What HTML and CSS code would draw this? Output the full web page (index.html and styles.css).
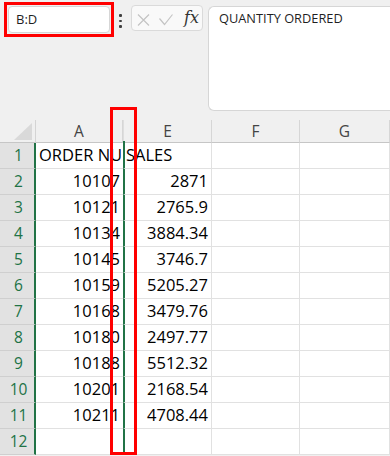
FILE: index.html
```html
<!DOCTYPE html>
<html>
<head>
<meta charset="utf-8">
<link rel="stylesheet" href="styles.css">
</head>
<body>
<div class="app">
  <div class="toolbar">
    <div class="namebox-frame"><div class="namebox">B:D</div></div>
    <div class="dots"><span></span><span></span><span></span></div>
    <div class="fxbox">
      <svg class="ico-x" width="13" height="12" viewBox="0 0 13 12"><path d="M1 0.5 L12 11.5 M12 0.5 L1 11.5" stroke="#c4c4c4" stroke-width="1.2" fill="none"/></svg>
      <svg class="ico-check" width="14" height="12" viewBox="0 0 14 12"><path d="M0.5 4.5 L5.5 10.5 L13.5 0.5" stroke="#c4c4c4" stroke-width="1.2" fill="none"/></svg>
      <span class="fx">fx</span>
    </div>
    <div class="formula">QUANTITY ORDERED</div>
  </div>
  <div class="sheet">
    <div class="corner"><svg width="19" height="18" viewBox="0 0 19 18"><polygon points="18,0 18,17 0,17" fill="#d9d9d9"/></svg></div>
    <div class="colhead ca">A</div>
    <div class="colhead ce">E</div>
    <div class="colhead">F</div>
    <div class="colhead">G</div>

    <div class="rowhead">1</div><div class="cell a txt">ORDER NU</div><div class="cell e txt">SALES</div><div class="cell"></div><div class="cell"></div>
    <div class="rowhead">2</div><div class="cell a">10107</div><div class="cell e">2871</div><div class="cell"></div><div class="cell"></div>
    <div class="rowhead">3</div><div class="cell a">10121</div><div class="cell e">2765.9</div><div class="cell"></div><div class="cell"></div>
    <div class="rowhead">4</div><div class="cell a">10134</div><div class="cell e">3884.34</div><div class="cell"></div><div class="cell"></div>
    <div class="rowhead">5</div><div class="cell a">10145</div><div class="cell e">3746.7</div><div class="cell"></div><div class="cell"></div>
    <div class="rowhead">6</div><div class="cell a">10159</div><div class="cell e">5205.27</div><div class="cell"></div><div class="cell"></div>
    <div class="rowhead">7</div><div class="cell a">10168</div><div class="cell e">3479.76</div><div class="cell"></div><div class="cell"></div>
    <div class="rowhead">8</div><div class="cell a">10180</div><div class="cell e">2497.77</div><div class="cell"></div><div class="cell"></div>
    <div class="rowhead">9</div><div class="cell a">10188</div><div class="cell e">5512.32</div><div class="cell"></div><div class="cell"></div>
    <div class="rowhead">10</div><div class="cell a">10201</div><div class="cell e">2168.54</div><div class="cell"></div><div class="cell"></div>
    <div class="rowhead">11</div><div class="cell a">10211</div><div class="cell e">4708.44</div><div class="cell"></div><div class="cell"></div>
    <div class="rowhead">12</div><div class="cell a"></div><div class="cell e"></div><div class="cell"></div><div class="cell"></div>
  </div>
  <div class="hidden-mark"></div>
</div>
</body>
</html>
```
FILE: styles.css
```css
html, body {
  margin: 0;
  padding: 0;
  background: #f0f0f0;
}
.app {
  position: relative;
  width: 390px;
  height: 456px;
  overflow: hidden;
  background: #f0f0f0;
  font-family: "Open Sans", "Noto Sans", sans-serif;
}
.toolbar {
  display: flex;
  align-items: flex-start;
  height: 120px;
}
.namebox-frame {
  margin: 2px 0 0 4px;
  width: 110px;
  height: 35px;
  box-sizing: border-box;
  border: 3px solid #ff0000;
  padding: 1px;
}
.namebox {
  box-sizing: border-box;
  height: 100%;
  background: #fff;
  border: 1px solid #d6d6d6;
  border-radius: 4px;
  font-size: 13px;
  line-height: 25px;
  padding-left: 7px;
  color: #1f1f1f;
}
.dots {
  display: flex;
  flex-direction: column;
  gap: 3px;
  margin: 14px 0 0 5px;
}
.dots span {
  width: 2.5px;
  height: 2.5px;
  background: #404040;
  border-radius: 1px;
}
.fxbox {
  margin: 5px 0 0 9.5px;
  width: 72px;
  height: 26px;
  box-sizing: border-box;
  border: 1px solid #dadada;
  border-radius: 4px;
  background: #f9f9f9;
  display: flex;
  align-items: center;
  padding: 3px 0 0 5px;
}
.ico-check {
  margin-left: 9px;
}
.fx {
  margin-left: 11px;
  font-family: "DejaVu Serif", "Liberation Serif", serif;
  font-style: italic;
  font-size: 16px;
  color: #333;
  line-height: 20px;
  margin-top: -4px;
}
.formula {
  margin: 6px 0 0 5px;
  flex: 1;
  height: 105px;
  box-sizing: border-box;
  background: #fff;
  border: 1px solid #d6d6d6;
  border-right: none;
  border-radius: 6px 0 0 6px;
  padding: 3px 10px;
  font-size: 12.8px;
  line-height: 17px;
  color: #1f1f1f;
}
.sheet {
  display: grid;
  grid-template-columns: 36px 87px 89px 88px 90px;
  grid-template-rows: 23px repeat(12, 26px);
}
.corner {
  background: #f0f0f0;
  border-right: 1px solid #d4d4d4;
  border-bottom: 1px solid #c6c6c6;
  display: flex;
  justify-content: flex-end;
  align-items: flex-end;
  padding: 0 2px 1px 0;
  box-sizing: border-box;
}
.corner svg { display: block; }
.colhead {
  box-sizing: border-box;
  background: #f0f0f0;
  border-right: 1px solid #d6d6d6;
  border-bottom: 1px solid #c6c6c6;
  color: #444;
  text-align: center;
  font-size: 15.5px;
  line-height: 23px;
}
.colhead.ce {
  position: relative;
  border-left: 1px solid #dedede;
}
.colhead.ce::after {
  content: "";
  position: absolute;
  left: -1px;
  bottom: -1px;
  width: 2px;
  height: 2px;
  background: #217346;
}
.rowhead {
  box-sizing: border-box;
  background: #e2e2e2;
  border-right: 2px solid #217346;
  border-bottom: 1px solid #cfcfcf;
  color: #217346;
  text-align: center;
  padding-left: 3px;
  font-size: 15.5px;
  line-height: 25px;
}
.cell {
  box-sizing: border-box;
  background: #fff;
  border-right: 1px solid #e1e1e1;
  border-bottom: 1px solid #e1e1e1;
  font-size: 16.5px;
  line-height: 24px;
  color: #000;
  text-align: right;
  padding: 0 3px;
  white-space: nowrap;
  overflow: hidden;
}
.cell.a {
  border-right: none;
  padding-right: 3px;
}
.cell.e {
  border-left: 2px solid #217346;
  padding-right: 3px;
}
.cell.txt {
  text-align: left;
  padding-left: 3px;
}
.cell.e.txt {
  padding-left: 1px;
}
.hidden-mark {
  position: absolute;
  left: 110px;
  top: 107px;
  width: 27px;
  height: 348px;
  box-sizing: border-box;
  border: 3px solid #ff0000;
}
```
